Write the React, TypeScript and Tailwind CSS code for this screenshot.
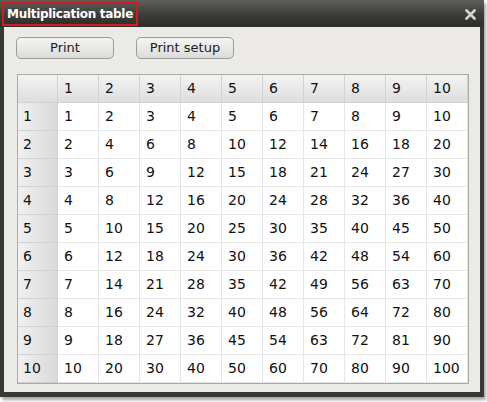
import React from 'react'

const nums = [1, 2, 3, 4, 5, 6, 7, 8, 9, 10]

export default function App() {
  return (
    <div className="w-[487px] h-[402px] bg-white relative" style={{ fontFamily: '"DejaVu Sans", Verdana, sans-serif' }}>
      <div className="w-[484px] h-[397px] flex flex-col bg-[#383835] shadow-[2px_3px_3px_rgba(0,0,0,0.35)]">
        {/* title bar */}
        <div className="h-[27px] flex items-center justify-between bg-gradient-to-b from-[#5e5e5b] via-[#3e3e3b] to-[#2c2c2a] pl-[2px] pr-[8px]">
          <div className="h-[24px] flex items-center border-2 border-[#d11a1a] px-[3px] text-white text-[12px] font-bold tracking-[-0.3px]">
            Multiplication table
          </div>
          <svg width="11" height="11" viewBox="0 0 11 11" className="mt-[1px]">
            <path d="M1.5 1.5 L9.5 9.5 M9.5 1.5 L1.5 9.5" stroke="#d4d4d4" strokeWidth="2.6" strokeLinecap="square" />
          </svg>
        </div>
        {/* body */}
        <div className="flex-1 mx-[4px] mb-[5px] bg-[#eceae6] flex flex-col px-[13px]">
          <div className="flex gap-[22px] mt-[10px] ml-[-1px]">
            <button className="w-[98px] h-[22px] rounded-[5px] border border-[#9c9c9c] bg-gradient-to-b from-[#f4f4f3] to-[#dcdcda] text-[13px] text-[#1a1a1a]">Print</button>
            <button className="w-[98px] h-[22px] rounded-[5px] border border-[#9c9c9c] bg-gradient-to-b from-[#f4f4f3] to-[#dcdcda] text-[13px] text-[#1a1a1a]">Print setup</button>
          </div>
          <div className="mt-[15px] w-[452px] border border-[#a9a9a9] bg-white">
            <div className="grid grid-cols-[40px_repeat(10,41px)]">
              <div className="h-[28px] bg-gradient-to-b from-[#f3f3f3] to-[#dedede] border-r border-b border-[#d2d2d2]" />
              {nums.map((n) => (
                <div key={n} className="h-[28px] flex items-center pl-[6px] text-[14px] text-[#111] bg-gradient-to-b from-[#f3f3f3] to-[#dedede] border-r border-b border-[#d2d2d2] last:border-r-0">
                  {n}
                </div>
              ))}
              {nums.map((r) => (
                <React.Fragment key={r}>
                  <div className="h-[28px] flex items-center pl-[5px] text-[14px] text-[#111] bg-gradient-to-r from-[#f0f0f0] to-[#dadada] border-r border-b border-[#d2d2d2]">
                    {r}
                  </div>
                  {nums.map((c) => (
                    <div key={c} className="h-[28px] flex items-center pl-[6px] text-[14px] text-[#111] border-r border-b border-[#e6e6e6]">
                      {r * c}
                    </div>
                  ))}
                </React.Fragment>
              ))}
            </div>
          </div>
        </div>
      </div>
    </div>
  )
}
